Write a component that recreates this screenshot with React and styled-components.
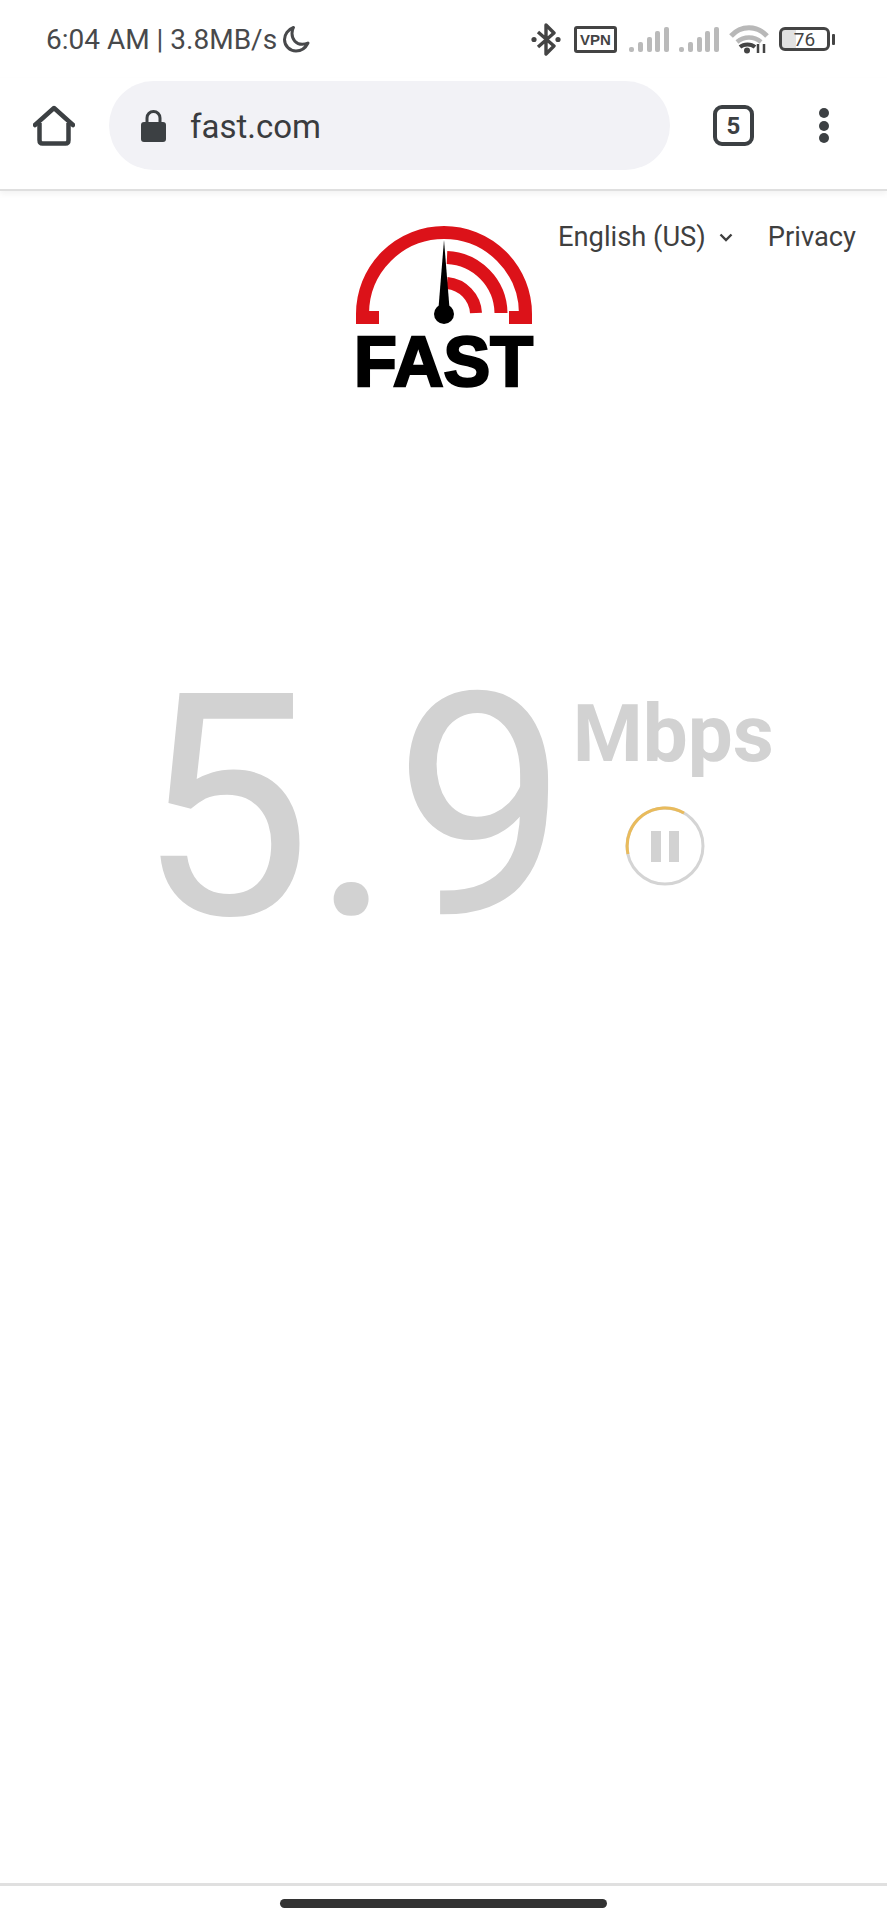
import React from 'react'
import styled, { createGlobalStyle } from 'styled-components'

const GlobalStyle = createGlobalStyle`
html, body {
margin:0;
padding:0;
background:#fff;
}
* {
box-sizing:border-box;
}
`

const Page = styled.div`
width:887px;
height:1920px;
display:flex;
flex-direction:column;
background:#fff;
font-family:Roboto, "Liberation Sans", sans-serif;
overflow:hidden;
`

const StatusBar = styled.div`
height:78px;
flex:none;
display:flex;
align-items:center;
justify-content:space-between;
padding:0 52px 0 46px;
color:#48494b;
font-size:28px;
`

const StatusLeft = styled.div`
display:flex;
align-items:center;
gap:5px;
`

const StatusRight = styled.div`
display:flex;
align-items:center;
gap:10px;
`

const VpnBox = styled.div`
width:43px;
height:27px;
border:3px solid #444;
border-radius:3px;
display:flex;
align-items:center;
justify-content:center;
font-family:"Liberation Sans", sans-serif;
font-size:15px;
font-weight:700;
color:#444;
margin:0 2px 0 3px;
`

const Battery = styled.div`
width:51px;
height:24px;
border:3px solid #444;
border-radius:6px;
display:flex;
align-items:center;
justify-content:center;
font-size:19px;
color:#444;
background:linear-gradient(90deg, #e2e2e2 0 32%, #fff 32%);
`

const BatteryWrap = styled.div`
display:flex;
align-items:center;
gap:2px;
&::after {
content:'';
width:3px;
height:11px;
border-radius:1px;
background:#444;
}
`

const Toolbar = styled.div`
height:113px;
flex:none;
display:flex;
align-items:flex-start;
padding:3px 0 0 33px;
border-bottom:2px solid #dfdfdf;
box-shadow:0 3px 6px rgba(0,0,0,0.05);
`

const HomeButton = styled.div`
width:42px;
height:41px;
margin:24px 34px 0 0;
`

const UrlPill = styled.div`
width:561px;
height:89px;
border-radius:45px;
background:#f2f2f6;
display:flex;
align-items:center;
padding:1px 0 0 32px;
gap:24px;
color:#3a3c3f;
font-size:33px;
`

const TabCount = styled.div`
width:41px;
height:41px;
margin:24px 0 0 43px;
border:4.5px solid #3c4043;
border-radius:9px;
display:flex;
align-items:center;
justify-content:center;
font-size:24px;
font-weight:700;
color:#3c4043;
`

const MenuDots = styled.div`
margin:27px 0 0 65px;
display:flex;
flex-direction:column;
gap:2.5px;
`

const Dot = styled.span`
width:10px;
height:10px;
border-radius:50%;
background:#3c4043;
`

const Main = styled.main`
flex:1;
padding-top:32px;
`

const TopRow = styled.div`
display:grid;
grid-template-columns:1fr 178px 1fr;
`

const Links = styled.div`
display:flex;
justify-content:flex-end;
align-items:flex-start;
gap:35px;
padding-right:31px;
color:#3f3f3f;
font-size:27.3px;
line-height:32px;
margin-top:-2px;
`

const LangPicker = styled.div`
display:flex;
align-items:center;
gap:13px;
`

const Logo = styled.div`
display:flex;
flex-direction:column;
align-items:center;
margin-top:2px;
`

const LogoWord = styled.div`
font-family:"Liberation Sans", sans-serif;
font-size:70px;
font-weight:700;
line-height:63px;
white-space:nowrap;
color:#000;
-webkit-text-stroke:2.5px #000;
`

const SpeedRow = styled.div`
display:flex;
align-items:flex-start;
padding-left:137px;
margin-top:258px;
`

const SpeedValue = styled.div`
font-size:311px;
line-height:311px;
color:#d2d2d2;
`

const SpeedSide = styled.div`
margin:42px 0 0 4.2px;
display:flex;
flex-direction:column;
align-items:flex-start;
`

const SpeedUnit = styled.div`
font-size:80px;
line-height:80px;
font-weight:700;
color:#d2d2d2;
`

const PauseButton = styled.svg`
display:block;
margin:32px 0 0 52px;
`

const BottomNav = styled.div`
height:37px;
flex:none;
border-top:3px solid #e0e0e0;
display:flex;
justify-content:center;
padding-top:13px;
`

const HomeHandle = styled.div`
width:327px;
height:9px;
border-radius:5px;
background:#333;
`

const MoonIcon = () => (
  <svg width="29" height="29" viewBox="0 0 29 29" fill="none">
    <path d="M11.500 2.500C6 4.500 2.500 9.500 2.500 14.500c0 6.500 5.300 11.500 11.500 11.500 5.200 0 9.600-3.200 12-8-1.800.9-3.900 1.300-5.800 1.300-6 0-10.200-4.800-10.200-10.700 0-2 .4-4.500 1.500-6.100z" stroke="#48494b" strokeWidth="3" strokeLinejoin="round" />
  </svg>
)

const BluetoothIcon = () => (
  <svg width="30" height="33" viewBox="0 0 30 33" fill="none">
    <path d="M7 9l16 14-8 8V2l8 8L7 24" stroke="#444" strokeWidth="3.400" strokeLinejoin="round" />
    <circle cx="3" cy="16.500" r="2.600" fill="#444" />
    <circle cx="27" cy="16.500" r="2.600" fill="#444" />
  </svg>
)

const SignalIcon = () => (
  <svg width="40" height="27" viewBox="0 0 40 27">
    <rect x="0" y="21" width="5" height="5" rx="2" fill="#bababa" />
    <rect x="9" y="16" width="5" height="10" rx="2" fill="#bababa" />
    <rect x="18" y="11" width="5" height="15" rx="2" fill="#bababa" />
    <rect x="26" y="5" width="5" height="21" rx="2" fill="#bababa" />
    <rect x="35" y="1" width="5" height="25" rx="2" fill="#bababa" />
  </svg>
)

const WifiIcon = () => (
  <svg width="40" height="29" viewBox="0 0 40 29" fill="none">
    <path d="M2 11C12 0 28 0 38 11" stroke="#b8b8b8" strokeWidth="5" />
    <path d="M8 17c7-6 17-6 24 0" stroke="#b8b8b8" strokeWidth="4.500" />
    <path d="M11 22c4-3.500 11-3.500 15 0" stroke="#444" strokeWidth="4" />
    <circle cx="18" cy="25.500" r="3" fill="#444" />
    <path d="M29 19v9M35 19v9" stroke="#444" strokeWidth="2.500" />
  </svg>
)

const LockIcon = () => (
  <svg width="25" height="32" viewBox="0 0 25 32" fill="none">
    <path d="M6 14V8a6.500 6.500 0 0 1 13 0v6" stroke="#3c4043" strokeWidth="3" />
    <rect x="0" y="12" width="25" height="20" rx="3" fill="#3c4043" />
  </svg>
)

const HomeIcon = () => (
  <svg width="42" height="41" viewBox="0 0 42 41" fill="none">
    <path d="M2 20L21 3l19 17" stroke="#3c4043" strokeWidth="4.500" strokeLinejoin="round" strokeLinecap="round" />
    <path d="M6.500 18v17c0 2 1 3.500 3 3.500h23c2 0 3-1.500 3-3.500V18" stroke="#3c4043" strokeWidth="4.500" />
  </svg>
)

const FastLogo = () => (
  <Logo>
    <svg width="178" height="106" viewBox="355 225 178 106" fill="none">
      <path d="M379 317.500H362.500V314a81.500 81.500 0 0 1 163 0v3.500H509" stroke="#dc1219" strokeWidth="13" />
      <path d="M447 257.500A56.500 56.500 0 0 1 501 313" stroke="#dc1219" strokeWidth="13" />
      <path d="M447 283A32 32 0 0 1 476 313" stroke="#dc1219" strokeWidth="12" />
      <path d="M444 240l5.500 68h-11z" fill="#000" />
      <circle cx="444" cy="314" r="10" fill="#000" />
    </svg>
    <LogoWord>FAST</LogoWord>
  </Logo>
)

const App = () => {
  return (
    <Page>
      <GlobalStyle />
      <StatusBar>
        <StatusLeft>
          <span>6:04 AM | 3.8MB/s</span>
          <MoonIcon />
        </StatusLeft>
        <StatusRight>
          <BluetoothIcon />
          <VpnBox>VPN</VpnBox>
          <SignalIcon />
          <SignalIcon />
          <WifiIcon />
          <BatteryWrap>
            <Battery>76</Battery>
          </BatteryWrap>
        </StatusRight>
      </StatusBar>
      <Toolbar>
        <HomeButton><HomeIcon /></HomeButton>
        <UrlPill>
          <LockIcon />
          <span>fast.com</span>
        </UrlPill>
        <TabCount>5</TabCount>
        <MenuDots>
          <Dot />
          <Dot />
          <Dot />
        </MenuDots>
      </Toolbar>
      <Main>
        <TopRow>
          <div />
          <FastLogo />
          <Links>
            <LangPicker>
              <span>English (US)</span>
              <svg width="14" height="9" viewBox="0 0 14 9" fill="none">
                <path d="M1.500 1.500L7 7l5.500-5.500" stroke="#3f3f3f" strokeWidth="2.400" />
              </svg>
            </LangPicker>
            <span>Privacy</span>
          </Links>
        </TopRow>
        <SpeedRow>
          <SpeedValue>5.9</SpeedValue>
          <SpeedSide>
            <SpeedUnit>Mbps</SpeedUnit>
            <PauseButton width="80" height="80" viewBox="0 0 80 80" fill="none">
              <circle cx="40" cy="40" r="38" stroke="#d4d4d4" strokeWidth="3" />
              <path d="M3 48A38 38 0 0 1 59 7" stroke="#e9bb5c" strokeWidth="3" />
              <rect x="26" y="25" width="10" height="31" fill="#d2d2d2" />
              <rect x="44" y="25" width="10" height="31" fill="#d2d2d2" />
            </PauseButton>
          </SpeedSide>
        </SpeedRow>
      </Main>
      <BottomNav>
        <HomeHandle />
      </BottomNav>
    </Page>
  )
}

export default App
